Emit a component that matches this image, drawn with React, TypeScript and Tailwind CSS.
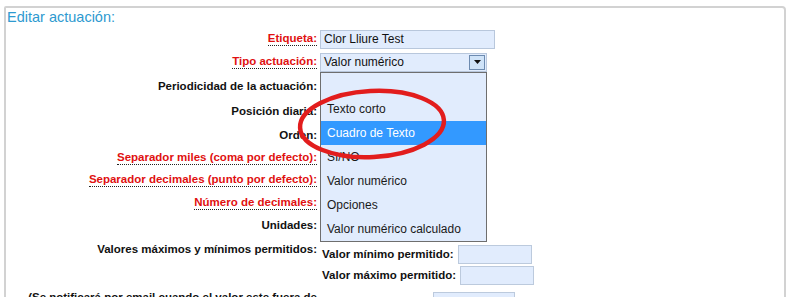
import React from "react"

const font = "font-['Liberation_Sans',Arial,sans-serif]"

type Row = {
  label: string
  red?: boolean
  h: string
}

const rows: Row[] = [
  { label: "Etiqueta:", red: true, h: "h-[22px]" },
  { label: "Tipo actuación:", red: true, h: "h-[24px]" },
  { label: "Periodicidad de la actuación:", h: "h-[25px]" },
  { label: "Posición diaria:", h: "h-[24px]" },
  { label: "Orden:", h: "h-[24px]" },
  { label: "Separador miles (coma por defecto):", red: true, h: "h-[22px]" },
  { label: "Separador decimales (punto por defecto):", red: true, h: "h-[22px]" },
  { label: "Número de decimales:", red: true, h: "h-[24px]" },
  { label: "Unidades:", h: "h-[20px]" },
]

const options = ["", "Texto corto", "Cuadro de Texto", "SI/NO", "Valor numérico", "Opciones", "Valor numérico calculado"]

const Label = ({ text, red }: { text: string; red?: boolean }) =>
  red ? (
    <span className="inline-block leading-[13px] border-b border-dotted border-[#222] text-[#e01010] font-bold">{text}</span>
  ) : (
    <span className="inline-block leading-[13px] text-[#111] font-bold">{text}</span>
  )

const TypeSelect = () => (
  <div className="relative w-[167px] h-[19px]">
    <div className="flex items-center w-full h-full bg-[#e1ecfd] border border-[#b8c7dc]">
      <span className="flex-1 pl-[3px] text-[12px] text-[#111] leading-[17px]">Valor numérico</span>
      <span className="flex items-center justify-center w-[16px] h-[15px] mr-[1px] border border-[#6d8bb0] bg-[#cfe3f8]">
        <svg width="7" height="4" viewBox="0 0 7 4">
          <path d="M0 0h7L3.5 4z" fill="#111" />
        </svg>
      </span>
    </div>
    {/* open list */}
    <div className="absolute left-0 top-[19px] z-10 w-[167px] bg-[#e1ecfd] border border-[#6e6e6e] flex flex-col">
      {options.map((o) => (
        <div
          key={o || "empty"}
          className={
            o === "Cuadro de Texto"
              ? "h-[24px] pl-[6px] flex items-center text-[12px] bg-[#3399ff] text-white"
              : "h-[24px] pl-[6px] flex items-center text-[12px] text-[#1a1a1a]"
          }
        >
          {o}
        </div>
      ))}
    </div>
  </div>
)

const SmallInput = ({ w }: { w: string }) => (
  <div className={`${w} h-[19px] bg-[#e1ecfd] border border-[#bccadd]`} />
)

export default function App() {
  return (
    <div className={`relative w-[789px] h-[297px] overflow-hidden bg-white pt-[6px] pl-[4px] pr-[3px] ${font}`}>
      <div className="h-[400px] border-2 border-[#d2d2d2] rounded-tr-[4px] rounded-tl-[2px]">
        <div className="pl-[1px] pt-[1px] text-[14.5px] leading-[16px] text-[#2e9ad0]">Editar actuación:</div>

        <div className="mt-[3px] text-[11.5px]">
          {rows.map((r, i) => (
            <div key={r.label} className={`flex ${r.h}`}>
              <div className="w-[311px] flex items-center justify-end">
                <Label text={r.label} red={r.red} />
              </div>
              <div className="pl-[3px] flex items-center">
                {i === 0 && (
                  <div className="w-[175px] h-[19px] bg-[#e1ecfd] border border-[#b8c7dc] pl-[3px] text-[12px] leading-[17px] text-[#111]">
                    Clor Lliure Test
                  </div>
                )}
                {i === 1 && <TypeSelect />}
              </div>
            </div>
          ))}

          {/* min / max */}
          <div className="flex">
            <div className="w-[311px] pt-[8px] flex justify-end">
              <Label text="Valores máximos y mínimos permitidos:" />
            </div>
            <div className="pl-[5px] pt-[9px] flex flex-col">
              <div className="h-[21px] flex items-center gap-[4px]">
                <Label text="Valor mínimo permitido:" />
                <SmallInput w="w-[74px]" />
              </div>
              <div className="h-[21px] flex items-center gap-[4px]">
                <Label text="Valor máximo permitido:" />
                <SmallInput w="w-[74px]" />
              </div>
            </div>
          </div>

          <div className="flex">
            <div className="w-[311px] pt-[5px] flex justify-end">
              <Label text="(Se notificará por email cuando el valor este fuera de" />
            </div>
            <div className="pl-[5px] pt-[6px] flex items-start gap-[4px]">
              <span className="w-[107px] pt-[1px]">
                <Label text="Valor para alertar:" />
              </span>
              <SmallInput w="w-[82px]" />
            </div>
          </div>
        </div>
      </div>

      {/* red annotation ellipse */}
      <svg className="absolute left-[295px] top-[85px] z-20" width="156" height="78" viewBox="0 0 156 78">
        <ellipse
          cx="77"
          cy="39"
          rx="72"
          ry="33"
          fill="none"
          stroke="#e21d1d"
          strokeWidth="4.5"
          transform="rotate(-3 77 39)"
        />
      </svg>
    </div>
  )
}
